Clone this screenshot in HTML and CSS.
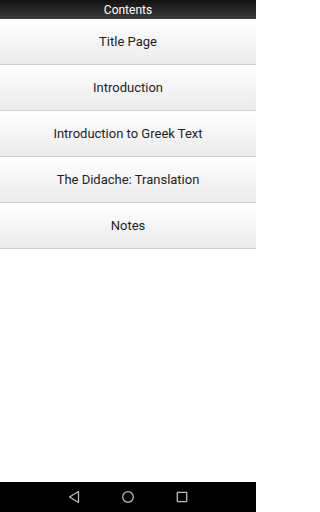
FILE: index.html
```html
<!DOCTYPE html>
<html>
<head>
<meta charset="utf-8">
<link rel="stylesheet" href="styles.css">
</head>
<body>
<div class="app">
  <header class="header">Contents</header>
  <ul class="toc">
    <li class="item">Title Page</li>
    <li class="item">Introduction</li>
    <li class="item">Introduction to Greek Text</li>
    <li class="item">The Didache: Translation</li>
    <li class="item">Notes</li>
  </ul>
  <div class="spacer"></div>
  <nav class="navbar">
    <svg class="nav-icon" width="14" height="14" viewBox="0 0 14 14"><path d="M11.5 1.5 L2.5 7 L11.5 12.5 Z" fill="none" stroke="#bdbdbd" stroke-width="1.3" stroke-linejoin="round"/></svg>
    <svg class="nav-icon" width="14" height="14" viewBox="0 0 14 14"><circle cx="7" cy="7" r="5.3" fill="none" stroke="#bdbdbd" stroke-width="1.3"/></svg>
    <svg class="nav-icon" width="14" height="14" viewBox="0 0 14 14"><rect x="2.3" y="2.3" width="9.4" height="9.4" fill="none" stroke="#bdbdbd" stroke-width="1.3" rx="0.6"/></svg>
  </nav>
</div>
</body>
</html>
```
FILE: styles.css
```css
html, body {
  margin: 0;
  padding: 0;
  width: 256px;
  height: 512px;
  overflow: hidden;
  background: #fff;
  font-family: Roboto, "Liberation Sans", sans-serif;
}
.app {
  display: flex;
  flex-direction: column;
  height: 512px;
}
.header {
  height: 19px;
  line-height: 20px;
  text-align: center;
  color: #fff;
  font-size: 12px;
  background: linear-gradient(#111, #3c3c3c);
}
.toc {
  list-style: none;
  margin: 0;
  padding: 0;
}
.item {
  height: 45px;
  box-sizing: content-box;
  border-bottom: 1px solid #cfcfcf;
  display: flex;
  align-items: center;
  justify-content: center;
  padding-top: 0;
  font-size: 13px;
  line-height: 17px;
  color: #1e1e1e;
  background: linear-gradient(#ffffff, #ebebeb);
}
.spacer {
  flex: 1;
}
.navbar {
  height: 30px;
  background: #000;
  display: flex;
  align-items: center;
  justify-content: center;
  gap: 40px;
}
.nav-icon {
  display: block;
}
```
